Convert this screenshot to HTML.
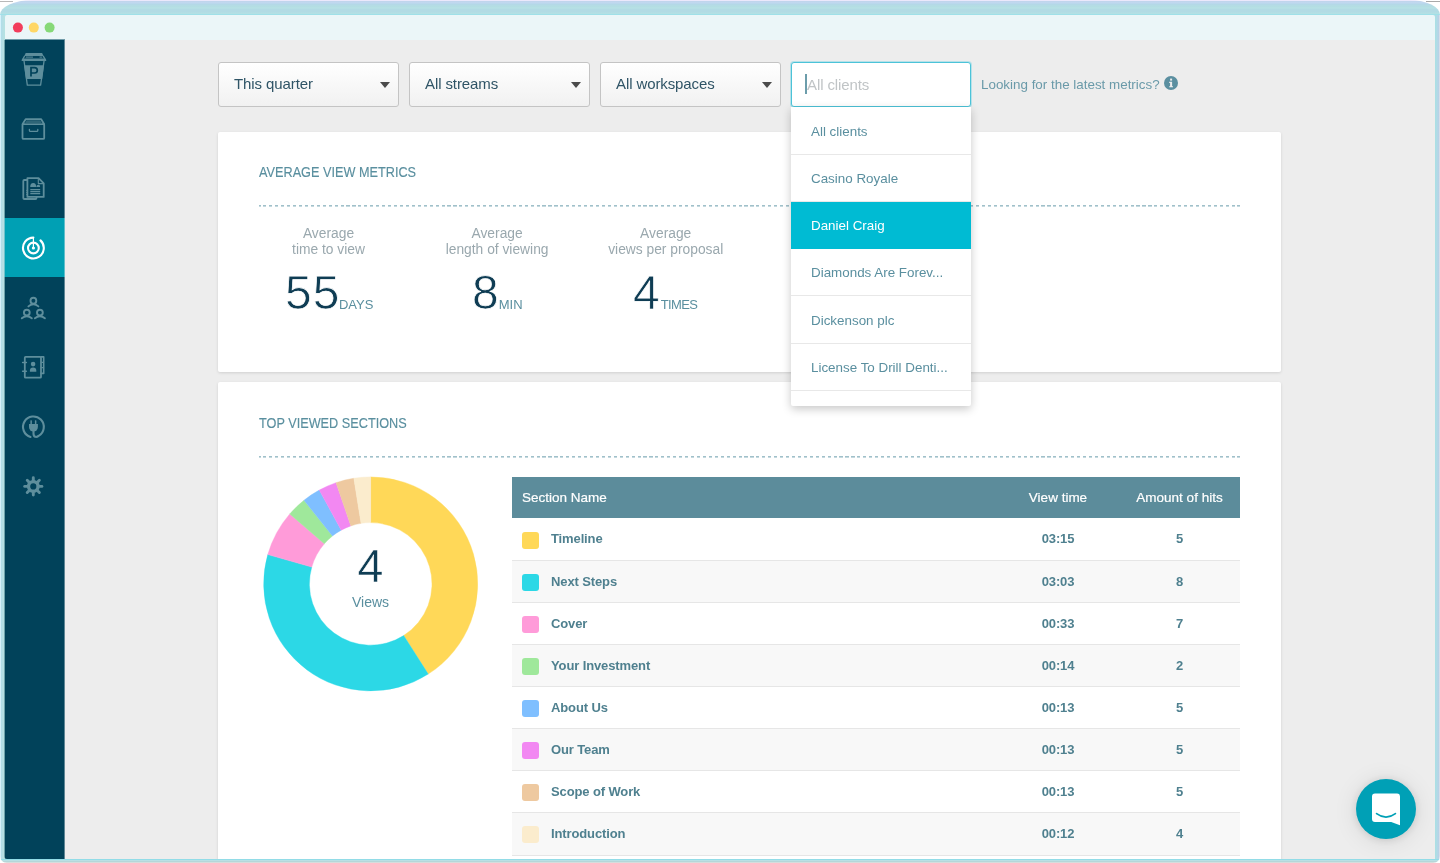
<!DOCTYPE html>
<html>
<head>
<meta charset="utf-8">
<title>Metrics</title>
<style>
*{box-sizing:border-box;margin:0;padding:0}
html,body{width:1440px;height:863px;overflow:hidden;background:#fff;font-family:"Liberation Sans",sans-serif;}
body{position:relative}
.abs{position:absolute}
#frame{position:absolute;left:0;top:0;width:1440px;height:863px;border-radius:32px 30px 7px 7px/15px 15px 7px 7px;
  background:
  linear-gradient(to bottom,#ebe8fb 0,#ebe8fb 1px,#c0d4ec 1px,#c1d9f0 3px,#b3d6e8 4px,#b5dbe6 5px,#b3dee2 7px,#b8e2e6 8px,#b2dbe4 9px,#b2dbe4 12px,#b3e0e4 13px,#b3e0e4 14px,#9fe0e8 14px,#9fe0e8 15px) 0 0/100% 15px no-repeat,
  linear-gradient(to top,#d6dddd 0,#d6dddd 1px,#b5d6d8 1px,#b5d6d8 2px,#b9e0e5 2px,#b9e0e5 3px,#92dce7 3px,#92dce7 4px) 0 100%/100% 4px no-repeat,
  linear-gradient(to right,#d6f1fb 0,#d6f1fb 1px,#b0dce9 1px,#b6dfe4 3px,#b5e3e3 5px) 0 0/5px 100% no-repeat,
  linear-gradient(to left,#d8dbe8 0,#d8dbe8 1px,#b8d0e4 1px,#b5d5e8 2px,#b2dbe6 3px,#a8e0e4 5px) 100% 0/5px 100% no-repeat,
  #b1dde3;}
#titlebar{position:absolute;left:5px;top:15px;width:1430px;height:25px;background:#ebf6f8;border-radius:2px 2px 0 0}
.tl{position:absolute;top:22.5px;width:10px;height:10px;border-radius:50%}
#sidebar{position:absolute;left:4px;top:40px;width:61px;height:819px;background:linear-gradient(to right,#6da3ac 0,#6da3ac 1px,#01425a 1px,#01425a 60px,#5f8695 60px);border-radius:0 0 0 3px}
#sidebar .active{position:absolute;left:0;top:178px;width:61px;height:59px;background:linear-gradient(to right,#6dc2cc 0,#6dc2cc 1px,#00a0b4 1px,#00a0b4 60px,#5fbfcb 60px)}
#main{position:absolute;left:65px;top:40px;width:1370px;height:819px;background:#ededed;overflow:hidden}
/* everything inside #page uses page coordinates */
#page{position:absolute;left:0;top:0;width:1440px;height:859px;overflow:hidden;will-change:transform}
.sel{position:absolute;top:62px;height:45px;width:181px;border:1px solid #c4c4c4;border-radius:3px;
  background:linear-gradient(180deg,#ffffff 0%,#f1f1f1 100%);color:#2f5466;font-size:15px;line-height:42px;padding-left:15px;letter-spacing:-.1px}
.sel:after{content:"";position:absolute;right:8px;top:18.5px;border-left:5px solid transparent;border-right:5px solid transparent;border-top:6px solid #4b4b4b}
.card{position:absolute;left:218px;width:1063px;background:#fff;border-radius:2px;box-shadow:0 1px 3px rgba(0,0,0,.12)}
.ctitle{position:absolute;left:259px;font-size:14.3px;color:#5a8f9f;white-space:nowrap;transform:scaleX(.888);transform-origin:0 50%;-webkit-text-stroke:.15px #5a8f9f}
.dash{position:absolute;left:259px;width:981px;height:2px;background:linear-gradient(180deg,rgba(255,255,255,.35) 0,rgba(255,255,255,.35) 1px,rgba(255,255,255,.6) 1px,rgba(255,255,255,.6) 2px),repeating-linear-gradient(90deg,#6d9fae 0,#6d9fae 1.5px,transparent 1.5px,transparent 4.3px,#6d9fae 4.3px,#6d9fae 5.94px)}
.mcol{position:absolute;width:169px;text-align:center}
.mlabel{font-size:13.8px;line-height:15.4px;color:#9aa8ae}

#inp{position:absolute;left:791px;top:62px;width:180px;height:45px;border:1px solid #4cc3d8;border-radius:3px;background:#fff;box-shadow:0 0 0 1px rgba(120,210,228,.45);font-size:15px;letter-spacing:-.1px;line-height:43px;padding-left:15px;color:#c0c4c6}
#inp:before{content:"";position:absolute;left:13.4px;top:11.4px;width:1.6px;height:20px;background:#6c9dab}
#look{position:absolute;left:981px;top:77px;font-size:13.4px;color:#6a9aa9;white-space:nowrap}
.big{position:absolute;top:262.6px;height:60px;white-space:nowrap;color:#0f3d54}
.big b{font-weight:normal;font-size:48px;line-height:60px;-webkit-text-stroke:.75px #fff}
.big span{font-size:13px;color:#5a8f9f;margin-left:1px}
#dnum{position:absolute;left:320px;top:540.5px;width:101px;text-align:center;font-size:46.5px;line-height:50px;color:#0f3d54;-webkit-text-stroke:.5px #fff}
#dviews{position:absolute;left:320px;top:593.6px;width:101px;text-align:center;font-size:14px;color:#5a8f9f}
.thead{position:absolute;left:512px;top:477px;width:728px;-webkit-text-stroke:.2px #fff;height:41px;background:#5c8c9b;color:#fff;font-size:13.5px;line-height:41px}
.thead span{position:absolute;top:0;white-space:nowrap}
.h1{left:10px}.h2{left:486px;width:120px;text-align:center}.h3{left:606px;width:123px;text-align:center}
.trow{position:absolute;left:512px;width:728px;height:42.1px;border-bottom:1px solid #e6e6e6;font-weight:bold;font-size:13px;letter-spacing:-.12px;line-height:41px;color:#4f808f}
.trow span{position:absolute;top:0;white-space:nowrap}
.sw{position:absolute;left:10px;top:13px;width:17px;height:17px;border-radius:3px}
.r0 .sw{top:14px}
.nm{left:39px}.vt{left:486px;width:120px;text-align:center}.ht{left:606px;width:123px;text-align:center}
#dd{position:absolute;left:791px;top:107px;width:180px;height:299px;background:#fff;overflow:hidden;box-shadow:0 3px 10px rgba(0,0,0,.22);border-radius:0 0 2px 2px}
.ddi{position:absolute;left:0;width:180px;height:47.2px;border-bottom:1px solid #e8e8e8;font-size:13.4px;line-height:48px;padding-left:20px;color:#5a8f9f;white-space:nowrap}
.ddi.hl{background:#00bbd3;color:#fff;border-bottom-color:#00bbd3}
#chat{position:absolute;left:1355.5px;top:779px;width:60px;height:60px;border-radius:50%;background:#00a0b6;box-shadow:0 1px 8px rgba(0,0,0,.12),0 2px 24px rgba(0,0,0,.10)}
</style>
</head>
<body>
<div class="abs" style="left:0;top:1px;width:13px;height:1px;background:#b9b9b9"></div><div class="abs" style="left:1426px;top:1px;width:14px;height:1px;background:#a9a9a9"></div>
<div id="frame"></div>
<div id="titlebar"></div>
<svg class="abs" style="left:0;top:15px" width="70" height="25" viewBox="0 15 70 25"><circle cx="17.9" cy="27.6" r="5" fill="#f23d5c"/><circle cx="33.8" cy="27.6" r="5" fill="#ffd766"/><circle cx="49.6" cy="27.6" r="5" fill="#86d978"/></svg>
<div class="abs" style="left:5px;top:39px;width:59.6px;height:1px;background:#6f9aa8"></div>
<div id="sidebar"><div class="active"></div></div>
<div id="main"></div>
<svg id="icons" class="abs" style="left:0;top:0" width="70" height="520" viewBox="0 0 70 520" fill="none" stroke-linecap="round" stroke-linejoin="round">
<path d="M25.7 53.1H42.1L43.5 55.9H24.3Z" fill="#5e8e9c"/>
<path d="M22.8 58.4H45.1L46.4 60.9H21.5Z" fill="#5e8e9c"/>
<g stroke="#5e8e9c" stroke-width="1.3">
<path d="M24.4 56.4L22.3 60M43.4 56.4L45.6 60"/>
<path d="M25.8 57.1H33M39.5 57.1H42.2" stroke-width="1" stroke-linecap="butt"/>
<path d="M24.0 60.6L27.3 85.2H40.6L44.1 60.6"/>
</g>
<path d="M24.1 65.2H44.0L42.2 79H26.0Z" fill="#5e8e9c"/>
<path d="M31 76.6V67.6H34.6a2.7 2.7 0 0 1 0 5.4H31" stroke="#01425a" stroke-width="1.7" stroke-linecap="butt" stroke-linejoin="miter"/>
<g stroke="#5e8e9c" stroke-width="1.8">
<rect x="22.5" y="124.2" width="21.7" height="14.7" rx="1"/>
<path d="M22.5 124.2L25.6 119.2H41.2L44.2 124.2"/>
<path d="M29.4 129.4v1a1 1 0 0 0 1 1h6.4a1 1 0 0 0 1 -1v-1" stroke-width="1.3"/>
</g>
<path d="M26.6 120.3H40.3L42 123.4H24.8Z" fill="#2e6577"/>
<g stroke="#5e8e9c" stroke-width="1.8">
<path d="M27.4 178.2H38.6L43.7 183.3V196.9H27.4Z"/>
<path d="M27 180H24.3a1 1 0 0 0 -1 1V198a1 1 0 0 0 1 1H35.5a1 1 0 0 0 1 -1V197.4"/>
</g>
<path d="M38.3 178.6V183.6H43.4" stroke="#5e8e9c" stroke-width="1.1"/>
<path d="M30.2 187A3 3.9 0 0 1 36.2 187H36.4A1.9 2.3 0 0 1 40.2 187Z" fill="#5e8e9c"/>
<g stroke="#5e8e9c" stroke-width="1.2" stroke-linecap="butt"><path d="M30.3 189.6H40.2M30.3 191.6H40.2M30.3 193.6H40.2"/><path d="M26.3 190.4h1M26.3 192.5h1M26.3 194.6h1" stroke-width="1"/></g>
<g stroke="#fff" stroke-width="2.1">
<path d="M40.49 240.39A10.4 10.4 0 1 1 33.4 237.6"/>
<circle cx="33.4" cy="248.0" r="5.4"/>
<path d="M33.4 237.6V248.0" stroke-width="1.2" stroke-linecap="butt"/>
</g><circle cx="33.4" cy="248.0" r="1.6" fill="#fff"/>
<g stroke="#5e8e9c" stroke-width="1.9"><circle cx="33.4" cy="300.7" r="2.9"/><path d="M28.4 306.4Q33.4 302.09999999999997 38.4 306.4"/><circle cx="26.8" cy="312.6" r="2.9"/><path d="M21.8 318.3Q26.8 314.0 31.8 318.3"/><circle cx="39.9" cy="312.6" r="2.9"/><path d="M34.9 318.3Q39.9 314.0 44.9 318.3"/></g>
<g stroke="#5e8e9c" stroke-width="1.8">
<rect x="24.8" y="356.9" width="16.2" height="20.8" rx="0.8"/>
<path d="M41 356.9H43.7V373.4H41" stroke-width="1.6"/>
<path d="M41.2 362.4H43.6M41.2 367.6H43.6" stroke-width="1.1" stroke-linecap="butt"/>
<path d="M22.6 362.6H26.4M22.6 371.2H26.4" stroke-width="1.5"/>
</g>
<circle cx="33.1" cy="364.1" r="2.3" fill="#5e8e9c"/>
<path d="M29.9 371.8V370.6a3.2 3.2 0 0 1 6.4 0V371.8Z" fill="#5e8e9c"/>
<path d="M30.53 436.90A10.4 10.4 0 1 1 38.60 435.91C36.60 437.51 33.6 437.6 33.5 433.6V430.5" stroke="#5e8e9c" stroke-width="2.1"/>
<path d="M29 424.1H37.9V427a4.45 4.45 0 0 1 -8.9 0Z" fill="#5e8e9c"/>
<rect x="30.4" y="420.3" width="1.5" height="3.8" rx=".5" fill="#5e8e9c"/><rect x="34.9" y="420.3" width="1.5" height="3.8" rx=".5" fill="#5e8e9c"/>
<g stroke="#5e8e9c" stroke-width="2.9"><path d="M33.30 481.40L33.30 477.80"/><path d="M36.84 482.86L39.38 480.32"/><path d="M38.30 486.40L41.90 486.40"/><path d="M36.84 489.94L39.38 492.48"/><path d="M33.30 491.40L33.30 495.00"/><path d="M29.76 489.94L27.22 492.48"/><path d="M28.30 486.40L24.70 486.40"/><path d="M29.76 482.86L27.22 480.32"/></g><circle cx="33.3" cy="486.4" r="4.75" stroke="#5e8e9c" stroke-width="3.3"/>
</svg>
<div id="page">
  <div class="sel" style="left:218px">This quarter</div>
  <div class="sel" style="left:409px">All streams</div>
  <div class="sel" style="left:600px">All workspaces</div>

  <div class="card" style="top:132px;height:240px"></div>
  <div class="card" style="top:382px;height:480px"></div>

  <div class="ctitle" style="top:164.3px">AVERAGE VIEW METRICS</div>
  <div class="dash" style="top:205px"></div>
  <div class="ctitle" style="top:415.3px">TOP VIEWED SECTIONS</div>
  <div class="dash" style="top:456px"></div>

  <div id="inp"><span>All clients</span></div>
  <div id="look">Looking for the latest metrics?</div>
  <svg id="info" class="abs" style="left:1163.5px;top:76.2px" width="14" height="14" viewBox="0 0 14 14"><circle cx="7" cy="7" r="7" fill="#5b8fa0"/><rect x="6.1" y="2.6" width="2" height="2" fill="#ededed"/><path d="M5.2 5.8H8.1V10.2H9V11.3H5.2V10.2H6.1V6.9H5.2Z" fill="#ededed"/></svg>

  <div class="mcol" style="left:244px;top:226.4px"><div class="mlabel"><span id="l1a">Average</span><br><span id="l1b">time to view</span></div></div>
  <div class="mcol" style="left:412.6px;top:226.4px"><div class="mlabel"><span>Average</span><br><span id="l2b">length of viewing</span></div></div>
  <div class="mcol" style="left:581.2px;top:226.4px"><div class="mlabel"><span>Average</span><br><span id="l3b">views per proposal</span></div></div>
  <div class="big" style="left:285px"><b style="letter-spacing:1px">55</b><span style="margin-left:-1.5px">DAYS</span></div>
  <div class="big" style="left:472px"><b>8</b><span style="margin-left:0">MIN</span></div>
  <div class="big" style="left:633px"><b>4</b><span style="letter-spacing:-.6px">TIMES</span></div>

<svg class="abs" style="left:0;top:0" width="1440" height="859" viewBox="0 0 1440 859"><path d="M370.70 476.90A107 107 0 0 1 428.22 674.12L403.66 635.59A61.3 61.3 0 0 0 370.70 522.60Z" fill="#ffd858" stroke="#ffd858" stroke-width="0.4"/><path d="M428.22 674.12A107 107 0 0 1 267.78 554.62L311.74 567.12A61.3 61.3 0 0 0 403.66 635.59Z" fill="#2cd8e6" stroke="#2cd8e6" stroke-width="0.4"/><path d="M267.78 554.62A107 107 0 0 1 289.75 513.93L324.32 543.81A61.3 61.3 0 0 0 311.74 567.12Z" fill="#ff9bd9" stroke="#ff9bd9" stroke-width="0.4"/><path d="M289.75 513.93A107 107 0 0 1 303.99 500.24L332.48 535.97A61.3 61.3 0 0 0 324.32 543.81Z" fill="#9fe89b" stroke="#9fe89b" stroke-width="0.4"/><path d="M303.99 500.24A107 107 0 0 1 319.25 490.08L341.23 530.15A61.3 61.3 0 0 0 332.48 535.97Z" fill="#7fbfff" stroke="#7fbfff" stroke-width="0.4"/><path d="M319.25 490.08A107 107 0 0 1 336.03 482.67L350.84 525.91A61.3 61.3 0 0 0 341.23 530.15Z" fill="#f288f2" stroke="#f288f2" stroke-width="0.4"/><path d="M336.03 482.67A107 107 0 0 1 353.82 478.24L361.03 523.37A61.3 61.3 0 0 0 350.84 525.91Z" fill="#eec9a0" stroke="#eec9a0" stroke-width="0.4"/><path d="M353.82 478.24A107 107 0 0 1 370.70 476.90L370.70 522.60A61.3 61.3 0 0 0 361.03 523.37Z" fill="#fbeccd" stroke="#fbeccd" stroke-width="0.4"/></svg>
  <div id="dnum">4</div><div id="dviews">Views</div>
<div class="thead"><span class="h1">Section Name</span><span class="h2">View time</span><span class="h3">Amount of hits</span></div><div class="trow r0" style="top:518px;height:43px;line-height:42px;background:#fff"><i class="sw" style="background:#ffd858"></i><span class="nm">Timeline</span><span class="vt">03:15</span><span class="ht">5</span></div>
<div class="trow r1" style="top:561px;height:42px;line-height:41px;background:#f8f8f8"><i class="sw" style="background:#2cd8e6"></i><span class="nm">Next Steps</span><span class="vt">03:03</span><span class="ht">8</span></div>
<div class="trow r2" style="top:603px;height:42px;line-height:41px;background:#fff"><i class="sw" style="background:#ff9bd9"></i><span class="nm">Cover</span><span class="vt">00:33</span><span class="ht">7</span></div>
<div class="trow r3" style="top:645px;height:42px;line-height:41px;background:#f8f8f8"><i class="sw" style="background:#9fe89b"></i><span class="nm">Your Investment</span><span class="vt">00:14</span><span class="ht">2</span></div>
<div class="trow r4" style="top:687px;height:42px;line-height:41px;background:#fff"><i class="sw" style="background:#7fbfff"></i><span class="nm">About Us</span><span class="vt">00:13</span><span class="ht">5</span></div>
<div class="trow r5" style="top:729px;height:42px;line-height:41px;background:#f8f8f8"><i class="sw" style="background:#f288f2"></i><span class="nm">Our Team</span><span class="vt">00:13</span><span class="ht">5</span></div>
<div class="trow r6" style="top:771px;height:42px;line-height:41px;background:#fff"><i class="sw" style="background:#eec9a0"></i><span class="nm">Scope of Work</span><span class="vt">00:13</span><span class="ht">5</span></div>
<div class="trow r7" style="top:813px;height:43px;line-height:42px;background:#f8f8f8"><i class="sw" style="background:#fbeccd"></i><span class="nm">Introduction</span><span class="vt">00:12</span><span class="ht">4</span></div>
<div id="dd"><div class="ddi" style="top:1px"><span>All clients</span></div><div class="ddi" style="top:48px"><span>Casino Royale</span></div><div class="ddi hl" style="top:95px"><span>Daniel Craig</span></div><div class="ddi" style="top:142px"><span>Diamonds Are Forev...</span></div><div class="ddi" style="top:189.6px"><span>Dickenson plc</span></div><div class="ddi" style="top:237px"><span>License To Drill Denti...</span></div><div class="ddi" style="top:284px"></div></div>
  <div id="chat"></div>
<svg class="abs" style="left:1355.5px;top:779px" width="60" height="60" viewBox="0 0 60 60"><path d="M19 14.5H41a3 3 0 0 1 3 3V46.3L35.2 43H19a3 3 0 0 1 -3 -3V17.5a3 3 0 0 1 3 -3Z" fill="#fff"/><path d="M20.6 34.6Q30 41.6 39.4 34.6" fill="none" stroke="#00a0b6" stroke-width="1.7" stroke-linecap="round"/></svg>
</div>
</body>
</html>
